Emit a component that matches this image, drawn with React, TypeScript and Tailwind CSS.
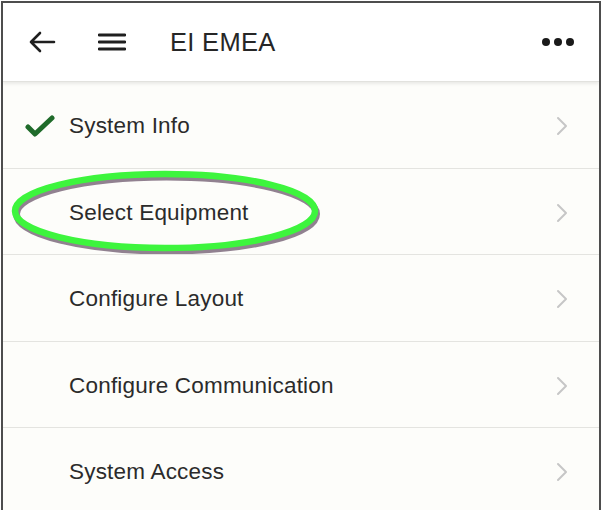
const steps = [
  { id: 'info', label: 'System Info', done: true },
  { id: 'equip', label: 'Select Equipment', done: false },
  { id: 'layout', label: 'Configure Layout', done: false },
  { id: 'comm', label: 'Configure Communication', done: false },
  { id: 'access', label: 'System Access', done: false },
];

export default function App() {
  return (
    <div className="w-[602px] h-[510px] bg-white pt-px px-px overflow-hidden" style={{ fontFamily: '"Liberation Sans", Arial, sans-serif' }}>
      <div className="relative h-full border-2 border-b-0 border-[#4d4d4d] bg-[#fdfdfa] overflow-hidden">
        {/* Header */}
        <div className="h-[79px] bg-white flex items-center pl-[25px] pr-[25px] border-b border-[#e2e2de] shadow-[0_2px_3px_rgba(0,0,0,0.08)]">
          <svg width="28" height="24" viewBox="0 0 28 24" className="text-[#1f1f1f]">
            <path d="M26 12H3M12 3L3 12l9 9" fill="none" stroke="currentColor" strokeWidth="2.6" strokeLinecap="round" strokeLinejoin="round" />
          </svg>
          <svg width="28" height="20" viewBox="0 0 28 20" className="ml-[42px] text-[#1f1f1f]">
            <path d="M1 3h26M1 10h26M1 17h26" stroke="currentColor" strokeWidth="2.8" strokeLinecap="round" />
          </svg>
          <span className="ml-[44px] text-[25.5px] text-[#262626] tracking-[0.3px]">EI EMEA</span>
          <div className="ml-auto flex gap-[4px]">
            <span className="w-[8px] h-[8px] rounded-full bg-[#1a1a1a]" />
            <span className="w-[8px] h-[8px] rounded-full bg-[#1a1a1a]" />
            <span className="w-[8px] h-[8px] rounded-full bg-[#1a1a1a]" />
          </div>
        </div>

        {/* Step list */}
        <div>
          {steps.map((s) => (
            <div key={s.id} className="h-[86.5px] flex items-center border-b border-[#e4e4e0] pl-[22px] pr-[31px] pt-[3px]">
              <div className="w-[44px] flex items-center">
                {s.done && (
                  <svg width="30" height="22" viewBox="0 0 30 22">
                    <path d="M3 12l7 7L27 3" fill="none" stroke="#1f6b2a" strokeWidth="5" strokeLinecap="round" strokeLinejoin="round" />
                  </svg>
                )}
              </div>
              <span className="text-[22.5px] text-[#2b2b2b] tracking-[0.2px]">{s.label}</span>
              <svg className="ml-auto" width="12" height="20" viewBox="0 0 12 20">
                <path d="M2 2l8 8-8 8" fill="none" stroke="#c6c6c6" strokeWidth="2" strokeLinecap="round" strokeLinejoin="round" />
              </svg>
            </div>
          ))}
        </div>

        {/* Highlight ellipse */}
        <svg className="absolute left-[4px] top-[165px] pointer-events-none" width="316" height="86" viewBox="0 0 316 86">
          <ellipse cx="158" cy="44" rx="150" ry="37" fill="none" stroke="#4a2e4a" strokeOpacity="0.6" strokeWidth="7" transform="translate(1.5 2)" />
          <ellipse cx="158" cy="43" rx="150" ry="37" fill="none" stroke="#3df53d" strokeWidth="6.5" />
        </svg>
      </div>
    </div>
  );
}
